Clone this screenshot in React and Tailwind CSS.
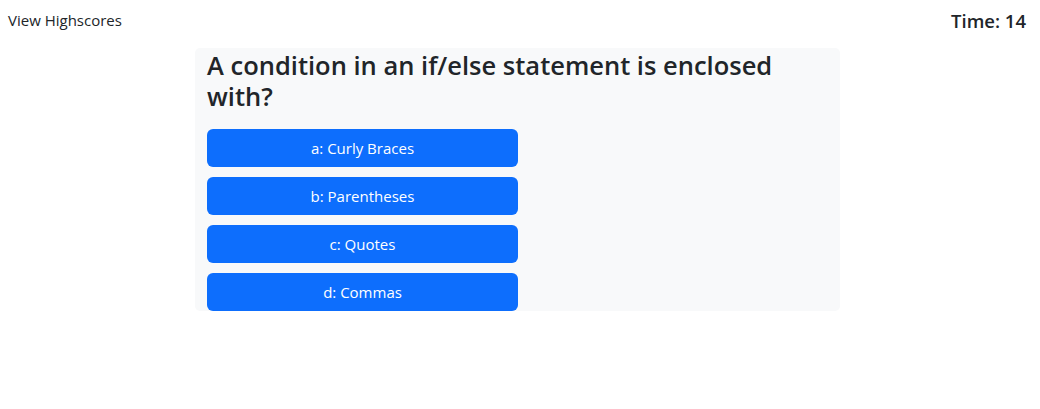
export default function App() {
  return (
    <div className="w-[1040px] h-[409px] bg-white text-[#212529] font-['Open_Sans',sans-serif]">
      <div className="flex justify-between items-start px-[8px] pt-[8px]">
        <a className="text-[15px] leading-[24px] text-[#212529]">View Highscores</a>
        <div className="text-[18.5px] leading-[24px] font-semibold mr-[6px] mt-[1px]">Time: 14</div>
      </div>
      <div className="ml-[195px] mt-[15px] w-[645px] bg-[#f8f9fa] rounded-[5px] px-[12px]">
        <h3 className="text-[25.5px] leading-[31px] font-semibold m-0 pt-[2px]">A condition in an if/else statement is enclosed with?</h3>
        <div className="flex flex-col gap-[10px] pt-[17px] w-[311px]">
          {["a: Curly Braces", "b: Parentheses", "c: Quotes", "d: Commas"].map((t) => (
            <button key={t} className="h-[38px] w-full rounded-[6px] bg-[#0d6efd] text-white text-[15px]">{t}</button>
          ))}
        </div>
      </div>
    </div>
  );
}
